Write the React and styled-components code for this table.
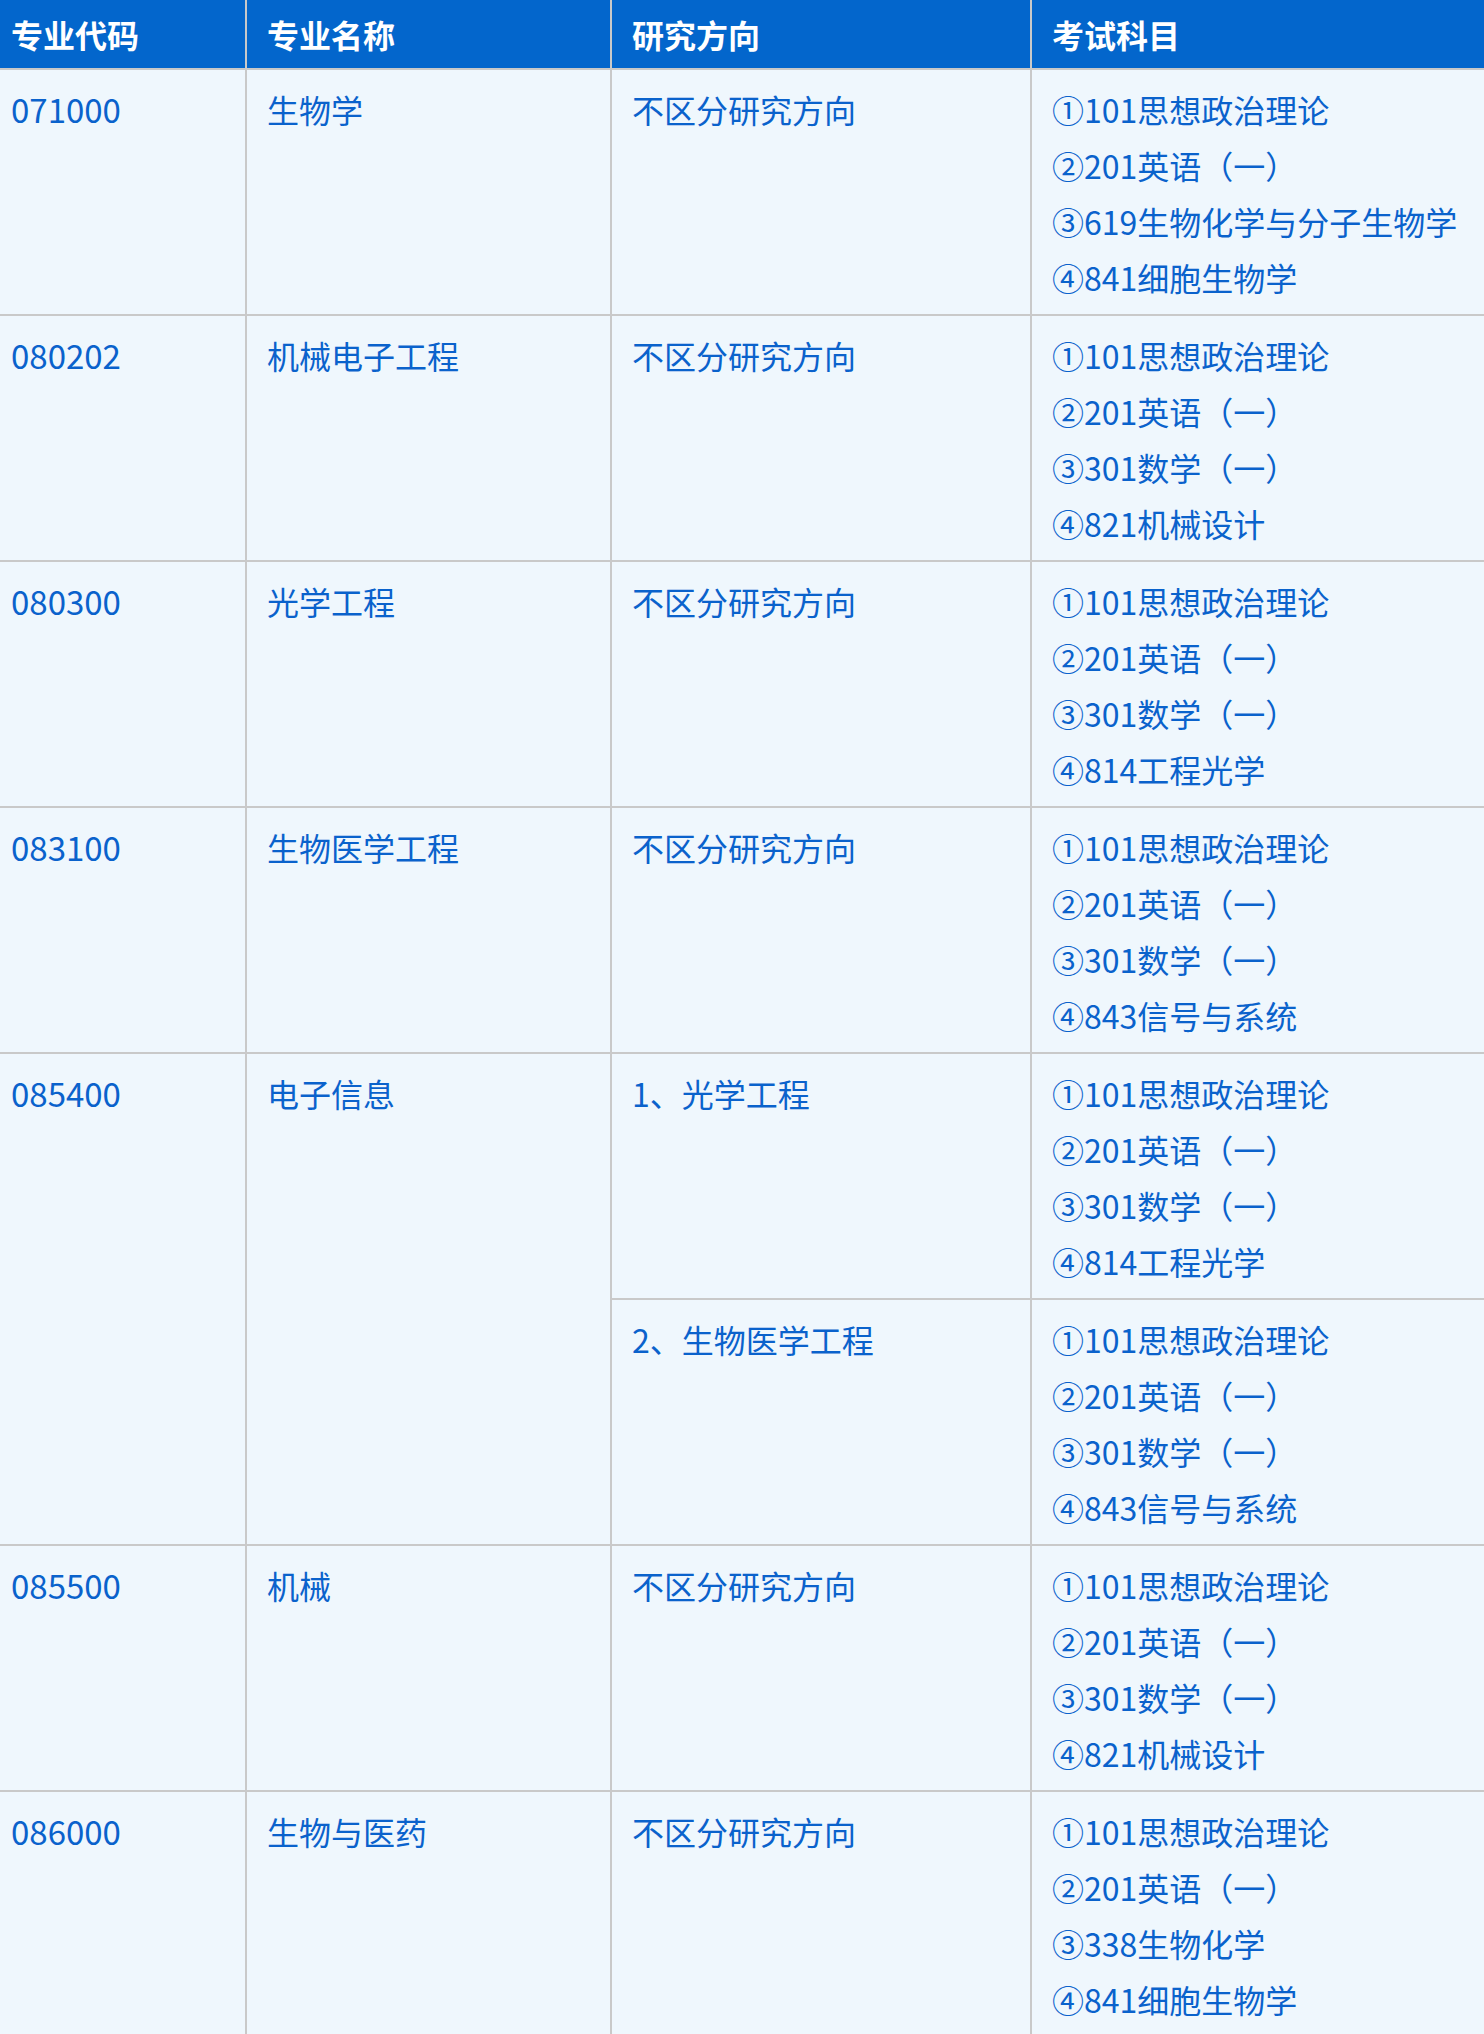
import React from 'react';
import styled, { createGlobalStyle } from 'styled-components';

const GlobalStyle = createGlobalStyle`
  html, body {
    margin: 0;
    padding: 0;
    background: #eff7fd;
  }
  body {
    font-family: "Noto Sans CJK SC", "Noto Sans", sans-serif;
  }
`;

const Table = styled.table`
  width: 1484px;
  table-layout: fixed;
  border-collapse: separate;
  border-spacing: 0;
  background: #eff7fd;
  color: #0a62cc;
  font-size: 32px;
`;

const HeadCell = styled.th`
  box-sizing: border-box;
  height: 70px;
  padding: 0 0 0 ${(p) => (p.$first ? '11px' : '20px')};
  background: #0366cc;
  color: #ffffff;
  font-weight: 700;
  font-size: 32px;
  line-height: 68px;
  text-align: left;
  border-right: 2px solid #c9c9c9;
  border-bottom: 2px solid #c9c9c9;

  &:last-child {
    border-right: none;
  }
`;

const Cell = styled.td`
  box-sizing: border-box;
  vertical-align: top;
  padding: 11px 0 9px ${(p) => (p.$first ? '11px' : '20px')};
  font-size: ${(p) => (p.$first ? '33px' : '32px')};
  line-height: 56px;
  border-right: 2px solid #c9c9c9;
  border-bottom: 2px solid #c9c9c9;
  white-space: nowrap;

  &:last-child {
    border-right: none;
  }
`;

const Line = styled.div`
  height: 56px;
`;

const majors = [
  {
    code: '071000',
    name: '生物学',
    tracks: [
      {
        dir: '不区分研究方向',
        exams: ['①101思想政治理论', '②201英语（一）', '③619生物化学与分子生物学', '④841细胞生物学'],
      },
    ],
  },
  {
    code: '080202',
    name: '机械电子工程',
    tracks: [
      {
        dir: '不区分研究方向',
        exams: ['①101思想政治理论', '②201英语（一）', '③301数学（一）', '④821机械设计'],
      },
    ],
  },
  {
    code: '080300',
    name: '光学工程',
    tracks: [
      {
        dir: '不区分研究方向',
        exams: ['①101思想政治理论', '②201英语（一）', '③301数学（一）', '④814工程光学'],
      },
    ],
  },
  {
    code: '083100',
    name: '生物医学工程',
    tracks: [
      {
        dir: '不区分研究方向',
        exams: ['①101思想政治理论', '②201英语（一）', '③301数学（一）', '④843信号与系统'],
      },
    ],
  },
  {
    code: '085400',
    name: '电子信息',
    tracks: [
      {
        dir: '1、光学工程',
        exams: ['①101思想政治理论', '②201英语（一）', '③301数学（一）', '④814工程光学'],
      },
      {
        dir: '2、生物医学工程',
        exams: ['①101思想政治理论', '②201英语（一）', '③301数学（一）', '④843信号与系统'],
      },
    ],
  },
  {
    code: '085500',
    name: '机械',
    tracks: [
      {
        dir: '不区分研究方向',
        exams: ['①101思想政治理论', '②201英语（一）', '③301数学（一）', '④821机械设计'],
      },
    ],
  },
  {
    code: '086000',
    name: '生物与医药',
    tracks: [
      {
        dir: '不区分研究方向',
        exams: ['①101思想政治理论', '②201英语（一）', '③338生物化学', '④841细胞生物学'],
      },
    ],
  },
];

const App = () => {
  return (
    <>
      <GlobalStyle />
      <Table>
        <colgroup>
          <col style={{ width: 247 }} />
          <col style={{ width: 365 }} />
          <col style={{ width: 420 }} />
          <col />
        </colgroup>
        <thead>
          <tr>
            <HeadCell $first>专业代码</HeadCell>
            <HeadCell>专业名称</HeadCell>
            <HeadCell>研究方向</HeadCell>
            <HeadCell>考试科目</HeadCell>
          </tr>
        </thead>
        <tbody>
          {majors.map((m) =>
            m.tracks.map((t, i) => (
              <tr key={`${m.code}-${i}`}>
                {i === 0 && (
                  <>
                    <Cell $first rowSpan={m.tracks.length}>{m.code}</Cell>
                    <Cell rowSpan={m.tracks.length}>{m.name}</Cell>
                  </>
                )}
                <Cell>{t.dir}</Cell>
                <Cell>
                  {t.exams.map((e) => (
                    <Line key={e}>{e}</Line>
                  ))}
                </Cell>
              </tr>
            ))
          )}
        </tbody>
      </Table>
    </>
  );
};

export default App;
